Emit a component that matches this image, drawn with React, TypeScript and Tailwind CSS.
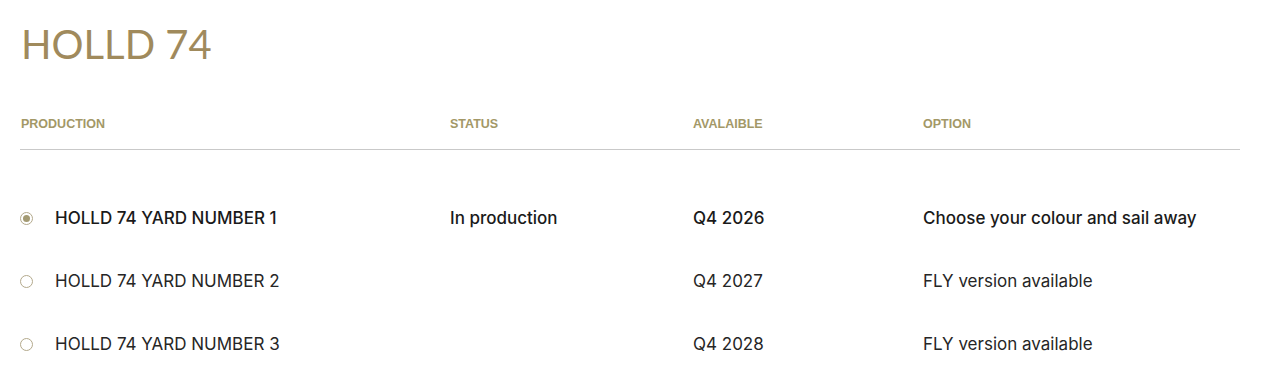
import React, { useState } from "react";

type Yard = {
  id: number;
  name: string;
  status: string;
  available: string;
  option: string;
};

const yards: Yard[] = [
  { id: 1, name: "HOLLD 74 YARD NUMBER 1", status: "In production", available: "Q4 2026", option: "Choose your colour and sail away" },
  { id: 2, name: "HOLLD 74 YARD NUMBER 2", status: "", available: "Q4 2027", option: "FLY version available" },
  { id: 3, name: "HOLLD 74 YARD NUMBER 3", status: "", available: "Q4 2028", option: "FLY version available" },
];

const cols = "grid grid-cols-[430px_243px_230px_1fr]";

const App: React.FC = () => {
  const [selected, setSelected] = useState(1);

  return (
    <section className="w-full bg-white pl-5 pr-[21px] pt-[18px] font-['Inter',sans-serif]">
      <h1 className="text-[40px] leading-[52px] font-normal text-[#a08a5c] pl-[1px] font-['Lato',sans-serif]">HOLLD 74</h1>

      {/* En-têtes */}
      <div className={`${cols} mt-[46px] pb-[17px] border-b border-[#c9c9c9] font-['Liberation_Sans',Arial,sans-serif] text-[12.5px] font-bold text-[#a39867] leading-4`}>
        <div className="pl-[1px]">PRODUCTION</div>
        <div>STATUS</div>
        <div>AVALAIBLE</div>
        <div>OPTION</div>
      </div>

      {/* Lignes */}
      <div className="pt-[56px]">
        {yards.map((y) => {
          const active = selected === y.id;
          return (
            <div
              key={y.id}
              onClick={() => setSelected(y.id)}
              className={`${cols} h-[63px] items-start cursor-pointer text-[17px] leading-6 ${active ? "font-medium text-[#1a1a1a]" : "font-normal text-[#262626]"}`}
            >
              <div className="flex items-center">
                <span className="w-[13px] h-[13px] rounded-full border border-[#b3a98c] flex items-center justify-center">
                  {active && <span className="w-[7px] h-[7px] rounded-full bg-[#a39a73]"></span>}
                </span>
                <span className="ml-[22px]">{y.name}</span>
              </div>
              <div>{y.status}</div>
              <div>{y.available}</div>
              <div>{y.option}</div>
            </div>
          );
        })}
      </div>
    </section>
  );
};

export default App;
